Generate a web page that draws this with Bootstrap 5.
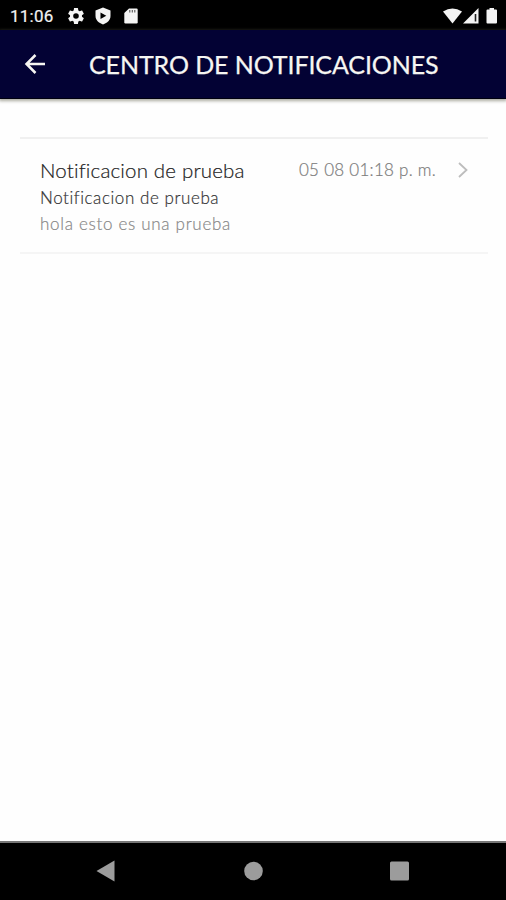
<!DOCTYPE html>
<html lang="es">
<head>
<meta charset="utf-8">
<meta name="viewport" content="width=device-width, initial-scale=1">
<title>Centro de notificaciones</title>
<link href="https://cdn.jsdelivr.net/npm/bootstrap@5.3.0/dist/css/bootstrap.min.css" rel="stylesheet">
<style>
body { font-family: Lato, "Open Sans", sans-serif; height: 900px; overflow: hidden; background: #fefefe; }
svg { display: block; flex: none; }
.status-bar { height: 30px; background: #000; color: #f2f2f2; padding: 1px 7px 0 10px; }
.clock { font: 400 17px/28px Roboto, sans-serif; width: 58px; letter-spacing: .25px; -webkit-text-stroke: .2px; }
.ic-shield { margin-left: 11px; }
.ic-card { margin-left: 13px; }
.app-bar { height: 69px; background: #030234; color: #f6f6f2; padding-left: 23px; border-bottom: 1px solid #00000f; box-shadow: 0 1px 3px 1px rgba(90,90,70,.5); }
.app-title { font-size: 25px; line-height: 30px; font-weight: 400; margin: 0 0 0 42px; letter-spacing: -.1px; -webkit-text-stroke: .25px; }
.notices { margin: 38px 18px 0 20px; }
.notice { border-top: 2px solid #f0f0f0; border-bottom: 2px solid #f5f5f5; padding: 17px 18px 0 20px; height: 117px; }
.n-title { font-size: 20.5px; line-height: 28px; font-weight: 300; color: #222; letter-spacing: .17px; -webkit-text-stroke: .2px; }
.n-sub { font-size: 17px; line-height: 26px; font-weight: 300; color: #333; letter-spacing: .57px; margin-top: 1px; -webkit-text-stroke: .2px; }
.n-body { font-size: 17px; line-height: 25px; font-weight: 300; color: #888; letter-spacing: .7px; -webkit-text-stroke: .2px; }
.n-date { font-size: 17px; line-height: 28px; font-weight: 300; color: #7c7c7c; letter-spacing: .27px; margin-right: 21px; -webkit-text-stroke: .2px; }
.nav-keys { height: 59px; background: #000; border-top: 2px solid #777; padding: 17px 96px 0 96px; }
</style>
</head>
<body class="d-flex flex-column">
<div class="status-bar d-flex align-items-center">
  <span class="clock">11:06</span>
  <svg width="16" height="16" viewBox="2 2 20 20" fill="#f4f4f4"><path d="M19.43 12.98c.04-.32.07-.64.07-.98s-.03-.66-.07-.98l2.11-1.65c.19-.15.24-.42.12-.64l-2-3.46c-.12-.22-.39-.3-.61-.22l-2.49 1c-.52-.4-1.08-.73-1.69-.98l-.38-2.65A.49.49 0 0 0 14 2h-4c-.25 0-.46.18-.49.42l-.38 2.65c-.61.25-1.17.59-1.69.98l-2.49-1c-.23-.09-.49 0-.61.22l-2 3.46c-.13.22-.07.49.12.64l2.11 1.65c-.04.32-.07.65-.07.98s.03.66.07.98l-2.11 1.65c-.19.15-.24.42-.12.64l2 3.46c.12.22.39.3.61.22l2.49-1c.52.4 1.08.73 1.69.98l.38 2.65c.03.24.24.42.49.42h4c.25 0 .46-.18.49-.42l.38-2.65c.61-.25 1.17-.59 1.69-.98l2.49 1c.23.09.49 0 .61-.22l2-3.46c.12-.22.07-.49-.12-.64l-2.11-1.65zM12 15.5a3.5 3.5 0 1 1 0-7 3.5 3.5 0 0 1 0 7z"/></svg>
  <svg class="ic-shield" width="16" height="18" viewBox="0 0 16 18"><path fill="#f4f4f4" d="M8 .5 15.500 3.500V9c0 4-3.200 7-7.500 8.500C3.700 16 .5 13 .5 9V3.500z"/><path fill="#000" d="M5.500 5.500v6.500L11.300 8.800z"/></svg>
  <svg class="ic-card" width="14" height="16" viewBox="0 0 14 16"><path fill="#f4f4f4" d="M5 .5h7.500q1.200 0 1.200 1.200v12.600q0 1.200-1.200 1.200H1.500Q.3 15.500.3 14.300V5z"/><path stroke="#555" stroke-width="1.100" d="M5.800 2v2.500M8.300 2v2.500M10.800 2v2.500"/></svg>
  <svg class="ms-auto" width="56" height="18" viewBox="0 0 56 18"><path fill="#f4f4f4" d="M0 4.500Q9.500-1.500 19 4.500L9.500 16.500z"/><path fill="#f4f4f4" d="M20 16.500 35.500 1v15.500z"/><path stroke="#222" stroke-width="1.600" d="M32.500 7v7.500"/><path fill="#f4f4f4" d="M46.500 1h4.500v1.500h2q1 0 1 1v12q0 1-1 1h-8.500q-1 0-1-1v-12q0-1 1-1h2z"/></svg>
</div>
<header class="app-bar d-flex align-items-center">
  <svg width="24" height="24" viewBox="0 0 24 24" fill="none" stroke="#f6f6f2" stroke-width="2.500"><path d="M22 12H4M12.500 3 3.500 12l9 9"/></svg>
  <h1 class="app-title text-nowrap">CENTRO DE NOTIFICACIONES</h1>
</header>
<main class="flex-grow-1">
  <div class="notices">
    <article class="notice">
      <div class="d-flex align-items-center text-nowrap">
        <span class="n-title me-auto">Notificacion de prueba</span>
        <span class="n-date">05 08 01:18 p. m.</span>
        <svg width="13" height="18" viewBox="0 0 13 18" fill="none" stroke="#bdbdbd" stroke-width="1.800"><path d="M2 2l7.500 7L2 16"/></svg>
      </div>
      <div class="n-sub">Notificacion de prueba</div>
      <div class="n-body">hola esto es una prueba</div>
    </article>
  </div>
</main>
<footer class="nav-keys d-flex justify-content-between align-items-start">
  <svg width="20" height="22" viewBox="0 0 20 22"><path fill="#9c9c9c" d="M.5 11 18.500.5v21z"/></svg>
  <svg width="20" height="22" viewBox="0 0 20 22"><circle cx="10.500" cy="11" r="9.300" fill="#9c9c9c"/></svg>
  <svg width="20" height="22" viewBox="0 0 20 22"><rect x="0" y="1.500" width="19" height="19" rx="1.500" fill="#9c9c9c"/></svg>
</footer>
<script src="https://cdn.jsdelivr.net/npm/bootstrap@5.3.0/dist/js/bootstrap.bundle.min.js"></script>
</body>
</html>
